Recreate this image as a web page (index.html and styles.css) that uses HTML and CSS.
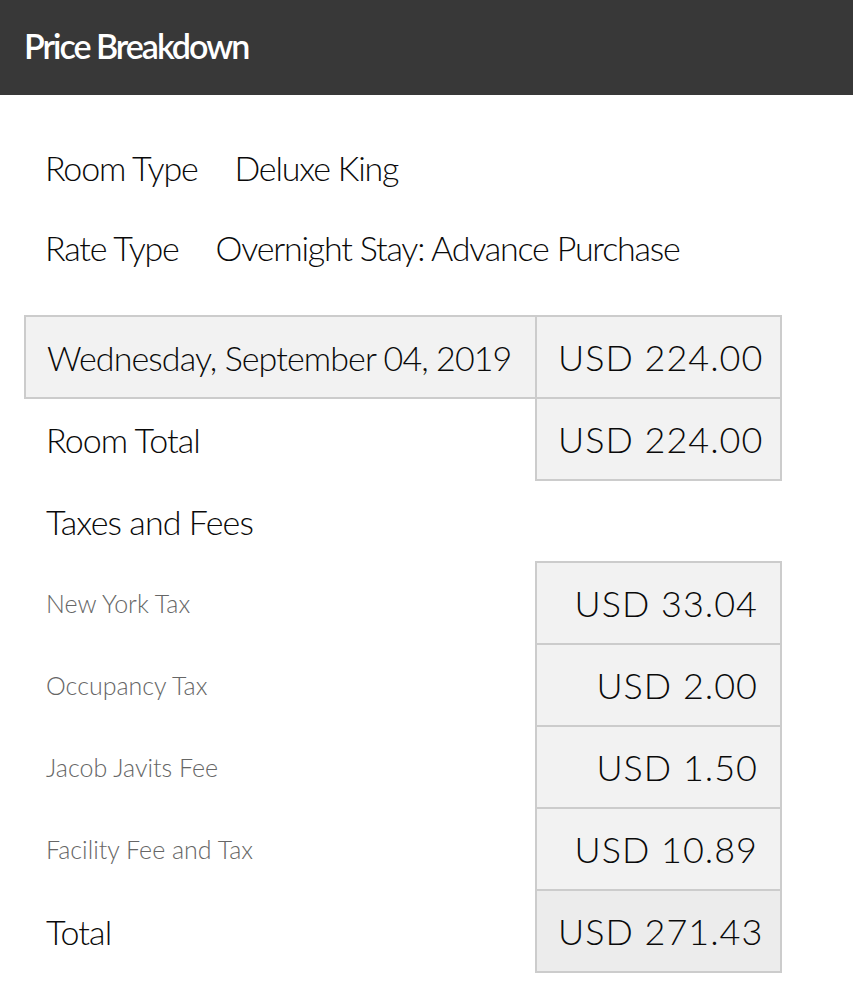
FILE: index.html
```html
<!DOCTYPE html>
<html lang="en">
<head>
<meta charset="utf-8">
<title>Price Breakdown</title>
<link rel="stylesheet" href="styles.css">
</head>
<body>
<header class="bar">
  <h1 class="bar-title">Price Breakdown</h1>
</header>
<main class="content">
  <div class="info">
    <div class="info-row"><span class="info-label">Room Type</span><span class="info-value">Deluxe King</span></div>
    <div class="info-row"><span class="info-label">Rate Type</span><span class="info-value">Overnight Stay: Advance Purchase</span></div>
  </div>
  <table class="prices">
    <colgroup>
      <col class="col-label">
      <col class="col-amount">
    </colgroup>
    <tr class="row-date">
      <td class="cell-label">Wednesday, September 04, 2019</td>
      <td class="cell-amount">USD 224.00</td>
    </tr>
    <tr>
      <td class="cell-label plain">Room Total</td>
      <td class="cell-amount">USD 224.00</td>
    </tr>
    <tr>
      <td class="cell-label plain">Taxes and Fees</td>
      <td class="cell-empty"></td>
    </tr>
    <tr>
      <td class="cell-label plain small">New York Tax</td>
      <td class="cell-amount">USD 33.04</td>
    </tr>
    <tr>
      <td class="cell-label plain small">Occupancy Tax</td>
      <td class="cell-amount">USD 2.00</td>
    </tr>
    <tr>
      <td class="cell-label plain small">Jacob Javits Fee</td>
      <td class="cell-amount">USD 1.50</td>
    </tr>
    <tr>
      <td class="cell-label plain small">Facility Fee and Tax</td>
      <td class="cell-amount">USD 10.89</td>
    </tr>
    <tr>
      <td class="cell-label plain">Total</td>
      <td class="cell-amount total">USD 271.43</td>
    </tr>
  </table>
</main>
</body>
</html>
```

FILE: styles.css
```css
html, body {
  margin: 0;
  padding: 0;
  background: #ffffff;
}

body {
  font-family: Lato, "Open Sans", "Liberation Sans", sans-serif;
  font-weight: 300;
  color: #0a0a0a;
}

.bar {
  background: #383838;
  height: 95px;
  display: flex;
  align-items: center;
  padding-left: 24px;
}

.bar-title {
  margin: 0;
  color: #ffffff;
  font-size: 34px;
  font-weight: 600;
  letter-spacing: -2px;
  line-height: 1;
  padding-bottom: 4px;
}

.content {
  padding: 32px 72px 20px 24px;
}

.info {
  padding-left: 21px;
  margin-bottom: 28px;
}

.info-row {
  height: 80px;
  display: flex;
  align-items: center;
  font-size: 34px;
  letter-spacing: -1.2px;
}

.info-label {
  margin-right: 37px;
}

.prices {
  width: 756px;
  table-layout: fixed;
  border-collapse: collapse;
  font-size: 34px;
  letter-spacing: -0.9px;
}

.col-label {
  width: 511px;
}

.col-amount {
  width: 245px;
}

.prices td {
  height: 80px;
  padding: 0 21px;
  vertical-align: middle;
  white-space: nowrap;
}

.row-date td {
  background: #f2f2f2;
  border: 2px solid #cccccc;
}

.prices .cell-amount {
  text-align: right;
  padding-right: 22px;
  background: #f2f2f2;
  border: 2px solid #cccccc;
  font-size: 36px;
  letter-spacing: 1px;
}

.prices .cell-amount.total {
  background: #ececec;
}

.cell-label.plain {
  border: 0;
}

.cell-label.small {
  font-size: 25px;
  color: #666666;
  letter-spacing: 0;
}

.cell-empty {
  border: 0;
}
```
